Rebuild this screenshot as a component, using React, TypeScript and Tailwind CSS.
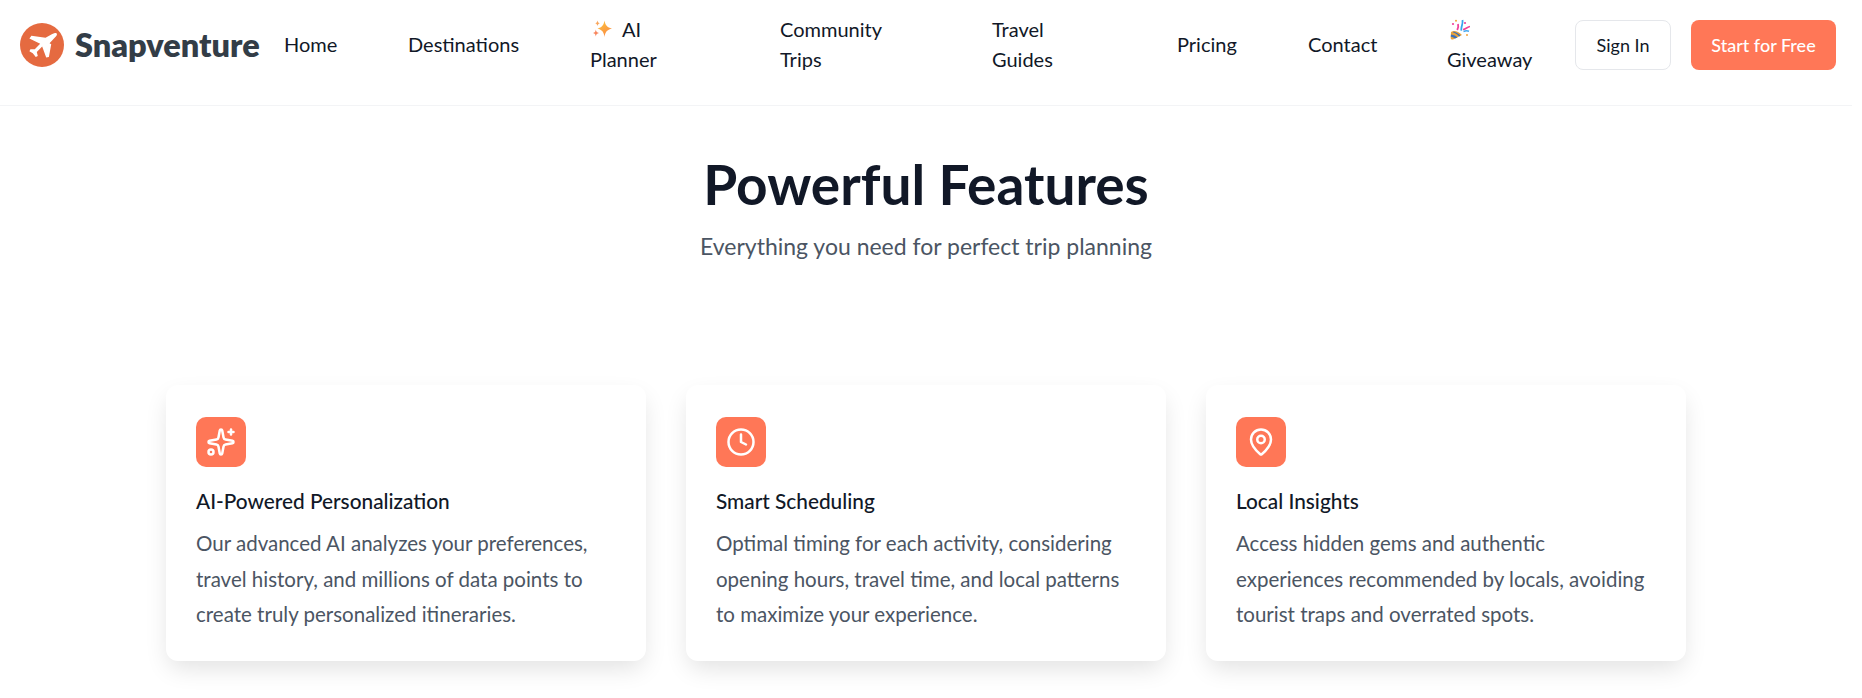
import React from 'react';
import { Sparkles, Clock, MapPin } from 'lucide-react';

const FEATURES = [
  {
    icon: Sparkles,
    title: 'AI-Powered Personalization',
    lines: ['Our advanced AI analyzes your preferences,', 'travel history, and millions of data points to', 'create truly personalized itineraries.'],
  },
  {
    icon: Clock,
    title: 'Smart Scheduling',
    lines: ['Optimal timing for each activity, considering', 'opening hours, travel time, and local patterns', 'to maximize your experience.'],
  },
  {
    icon: MapPin,
    title: 'Local Insights',
    lines: ['Access hidden gems and authentic', 'experiences recommended by locals, avoiding', 'tourist traps and overrated spots.'],
  },
];

function SparkleEmoji() {
  return (
    <svg viewBox="0 0 20 20" className="h-5 w-5 shrink-0">
      <defs>
        <linearGradient id="spark" x1="0" y1="0" x2="0.6" y2="1">
          <stop offset="0" stopColor="#fcc83c" />
          <stop offset="1" stopColor="#fb8c45" />
        </linearGradient>
      </defs>
      <path d="M11.500 1.500c.7 4.500 2.500 6.800 7.500 8-5 1.200-6.800 3.500-7.500 8.500-.7-5-2.500-7.300-7-8.500 4.500-1.200 6.300-3.500 7-8z" fill="url(#spark)" />
      <path d="M4.500 1.500c.3 1.700 1 2.400 2.500 2.800-1.500.4-2.200 1.100-2.500 2.800C4.200 5.400 3.500 4.700 2 4.300 3.500 3.900 4.200 3.200 4.500 1.500z" fill="#f9a65c" />
      <path d="M2.800 10.500c.4 2.200 1.300 3 3.200 3.500-1.900.5-2.800 1.300-3.200 3.500C2.400 15.300 1.900 14.500 0 14c1.900-.5 2.400-1.300 2.800-3.500z" fill="#f8875f" />
    </svg>
  );
}

function PartyEmoji() {
  return (
    <svg viewBox="0 0 20 21" className="h-[21px] w-5 shrink-0">
      <path d="M1 13c3-2 7-1 11 3L3 20.500c-1.500.3-2.500-.5-2.300-2z" fill="#e9a23b" />
      <path d="M1 15.500c3 .2 5 1.800 6.500 3L5 19.600c-1-1-2.500-1.700-4.200-1.900z" fill="#3b6fb8" />
      <path d="M3.500 12.400c3 .6 5.300 2.300 7 4.300l-1.500.7c-1.500-2-3.500-3.400-6.200-4.200z" fill="#3b6fb8" />
      <path d="M12.500 1c.5 3-.5 5-1 7.500-.2 1.200-.2 2.300-.3 3.200" stroke="#35a4ee" strokeWidth="1.800" fill="none" />
      <path d="M8 5c.6 2 .2 4-.8 6" stroke="#f0429a" strokeWidth="1.800" fill="none" />
      <path d="M13 10.500c2.500 0 4.500-2.800 7-3" stroke="#f0429a" strokeWidth="1.500" fill="none" />
      <path d="M13.500 12.500c2-.8 3.800-.8 5.500-.3" stroke="#45a9f0" strokeWidth="1.500" fill="none" />
      <circle cx="3" cy="5" r="1.100" fill="#f0429a" />
      <circle cx="15" cy="4" r="1.100" fill="#f0429a" />
      <circle cx="6" cy="1.800" r="1" fill="#f2a53c" />
      <circle cx="17" cy="16" r="1" fill="#f2a53c" />
    </svg>
  );
}

function Logo() {
  return (
    <div className="flex w-[268px] shrink-0 items-center gap-[11px] pl-1">
      <svg viewBox="0 0 131 131" className="h-11 w-11 shrink-0">
        <circle cx="65.500" cy="65.500" r="65.500" fill="#e56a40" />
        <path
          d="M104 30c6-2 8 4 4 9L88 60l5 3-7 38-8 2-12-33-16 16 3 12-6 3-9-11-10-6 3-6h13l16-16-32-16 6-8 42 6 20-11z"
          fill="#ffffff"
        />
      </svg>
      <span className="text-[32.500px] font-extrabold leading-none text-[#333d47]">Snapventure</span>
    </div>
  );
}

function NavLinks() {
  return (
    <nav className="flex -translate-y-px items-center text-[20px] leading-[30px] text-[#111827]">
      <a className="w-[124px]">Home</a>
      <a className="w-[182px]">Destinations</a>
      <a className="w-[190px]">
        <span className="flex items-center gap-[9px] pl-[3px]"><SparkleEmoji /> AI</span>
        Planner
      </a>
      <a className="w-[212px]">Community<br />Trips</a>
      <a className="w-[185px]">Travel<br />Guides</a>
      <a className="w-[131px]">Pricing</a>
      <a className="w-[139px]">Contact</a>
      <a className="w-[128px]">
        <span className="flex h-[30px] items-center pl-[3px]"><PartyEmoji /></span>
        Giveaway
      </a>
    </nav>
  );
}

export default function App() {
  return (
    <div className="h-[698px] w-[1852px] overflow-hidden bg-white font-['Lato',sans-serif]">
      <header className="flex h-[106px] items-center border-b border-[#f3f4f6] px-4 pb-[15px]">
        <Logo />
        <NavLinks />
        <div className="ml-auto flex items-center gap-5">
          <button className="h-[50px] w-[96px] rounded-lg border border-[#e5e7eb] bg-white text-[18px] text-[#111827]">Sign In</button>
          <button className="h-[50px] w-[145px] rounded-lg bg-[#ff7757] text-[18px] font-medium text-white">Start for Free</button>
        </div>
      </header>

      <section className="pt-[40px] text-center">
        <h1 className="text-[55px] font-bold leading-[76px] text-[#111827]">Powerful Features</h1>
        <p className="mt-[8px] text-[23px] leading-[32px] text-[#4b5563]">Everything you need for perfect trip planning</p>
      </section>

      <section className="mx-auto mt-[123px] grid w-[1520px] grid-cols-3 gap-10">
        {FEATURES.map((f) => (
          <div key={f.title} className="h-[276px] rounded-xl bg-white px-[30px] pt-[32px] shadow-[0_10px_25px_-3px_rgba(0,0,0,0.12)]">
            <div className="flex h-[50px] w-[50px] items-center justify-center rounded-[10px] bg-[#ff7757]">
              <f.icon size={30} strokeWidth={2} className="text-white" />
            </div>
            <h3 className="mt-[20px] text-[20.800px] font-medium leading-[28px] text-[#111827]">{f.title}</h3>
            <p className="mt-[11px] text-[20.500px] leading-[35.500px] text-[#4b5563]">
              {f.lines.map((line) => (
                <span key={line} className="block whitespace-nowrap">{line}</span>
              ))}
            </p>
          </div>
        ))}
      </section>
    </div>
  );
}
